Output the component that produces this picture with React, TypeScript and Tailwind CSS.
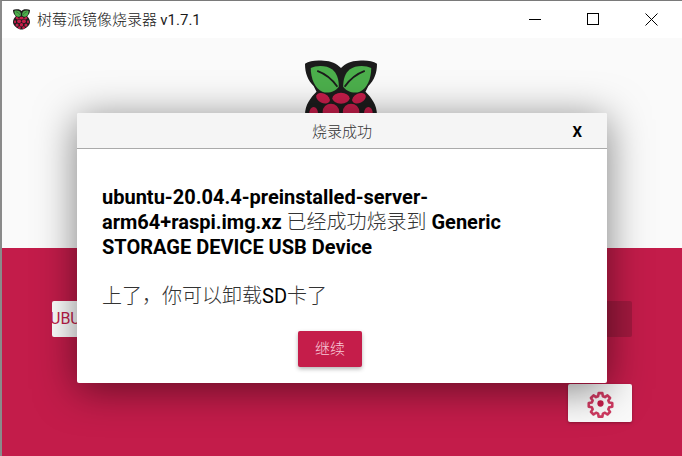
import React from "react";

function Logo({ className }: { className?: string }) {
  return (
    <svg viewBox="0 0 100 122" className={className}>
      <path d="M0 5 C6 1 16 0 26 1 C36 1 44 5 50 11 C56 5 64 1 74 1 C84 0 94 1 100 5 C100 18 96 28 88 36 L84 44 C92 52 100 62 100 76 C100 94 82 110 62 118 C56 121 44 121 38 118 C18 110 0 94 0 76 C0 62 8 52 16 44 L12 36 C4 28 0 18 0 5 Z" fill="#1c1c1c" />
      <path d="M8 11 C16 7 30 7 38 13 C44 18 47 26 47 37 C42 44 32 47 24 44 C14 40 8 26 8 11 Z" fill="#4caf4c" />
      <path d="M92 11 C84 7 70 7 62 13 C56 18 53 26 53 37 C58 44 68 47 76 44 C86 40 92 26 92 11 Z" fill="#4caf4c" />
      <path d="M17 15 C28 19 38 27 45 37" fill="none" stroke="#1c1c1c" strokeWidth="2.5" />
      <path d="M83 15 C72 19 62 27 55 37" fill="none" stroke="#1c1c1c" strokeWidth="2.5" />
      <ellipse cx="50" cy="53" rx="12" ry="7.5" fill="#c51d4a" />
      <ellipse cx="25" cy="53" rx="10" ry="6.5" fill="#c51d4a" transform="rotate(25 25 53)" />
      <ellipse cx="75" cy="53" rx="10" ry="6.5" fill="#c51d4a" transform="rotate(-25 75 53)" />
      <circle cx="36" cy="72" r="11.5" fill="#c51d4a" />
      <circle cx="64" cy="72" r="11.5" fill="#c51d4a" />
      <ellipse cx="12" cy="74" rx="6" ry="9" fill="#c51d4a" />
      <ellipse cx="88" cy="74" rx="6" ry="9" fill="#c51d4a" />
      <circle cx="50" cy="92" r="10" fill="#c51d4a" />
      <circle cx="24" cy="94" r="9" fill="#c51d4a" />
      <circle cx="76" cy="94" r="9" fill="#c51d4a" />
      <circle cx="38" cy="109" r="8" fill="#c51d4a" />
      <circle cx="62" cy="109" r="8" fill="#c51d4a" />
    </svg>
  );
}

function Gear() {
  return (
    <svg viewBox="0 0 24 24" className="w-[29px] h-[29px]" fill="none" stroke="#cf3a61" strokeWidth="2.4" strokeLinecap="round" strokeLinejoin="round">
      <path d="M10.3 2.5h3.4l.5 2.8 1.9.8 2.3-1.6 2.4 2.4-1.6 2.3.8 1.9 2.8.5v3.4l-2.8.5-.8 1.9 1.6 2.3-2.4 2.4-2.3-1.6-1.9.8-.5 2.8h-3.4l-.5-2.8-1.9-.8-2.3 1.6-2.4-2.4 1.6-2.3-.8-1.9-2.8-.5v-3.4l2.8-.5.8-1.9-1.6-2.3 2.4-2.4 2.3 1.6 1.9-.8z" transform="translate(1.2 1.2) scale(.9)" />
      <circle cx="12" cy="12" r="2.6" fill="#c51d4a" stroke="none" />
    </svg>
  );
}

export default function App() {
  return (
    <div
      className="relative w-[682px] h-[456px] overflow-hidden flex flex-col bg-white border-t border-t-[#7a7a7a] border-l-2 border-l-[#8a8a8a]"
      style={{ fontFamily: 'Roboto, "Noto Sans CJK SC", sans-serif' }}
    >
      <div className="h-[37px] shrink-0 bg-white flex items-center">
        <Logo className="w-[17px] h-[21px] ml-[11px] mr-[7px]" />
        <span className="text-[15px] text-[#1a1a1a]" style={{ fontFamily: '"Noto Sans CJK SC", sans-serif', fontWeight: 300 }}>
          树莓派镜像烧录器 <span style={{ fontFamily: 'Roboto', fontWeight: 400 }}>v1.7.1</span>
        </span>
        <div className="ml-auto flex items-center pr-[2px] -mt-[1px]">
          <div className="w-[58px] flex justify-center"><div className="w-3 h-px bg-black" /></div>
          <div className="w-[58px] flex justify-center"><div className="w-3 h-3 border border-black" /></div>
          <div className="w-[58px] flex justify-center">
            <svg width="13" height="13" viewBox="0 0 13 13" stroke="black" strokeWidth="1"><path d="M.5.5l12 12M12.5.5l-12 12" /></svg>
          </div>
        </div>
      </div>

      <div className="h-[210px] shrink-0 bg-[#fafafa] flex justify-center pt-[22px]">
        <Logo className="w-[72px] h-[88px] -ml-[2px]" />
      </div>

      <div className="flex-1 bg-[#c31c4a] pl-[50px] pr-[50px] pt-[53px] flex flex-col">
        <div className="flex justify-between">
          <div className="w-[200px] h-[36px] bg-white rounded-[2px] flex items-center text-[16px] text-[#c31c4a] overflow-hidden"><span className="-ml-[2px]">UBUNTU</span></div>
          <div className="w-[200px] h-[36px] bg-[#a3193f] rounded-[2px]" />
        </div>
        <div className="flex justify-end mt-[47px]">
          <div className="w-[64px] h-[38px] bg-[#fafafa] rounded-[2px] flex items-center justify-center shadow-[0_1px_3px_rgba(0,0,0,0.3)]">
            <Gear />
          </div>
        </div>
      </div>

      <div className="absolute left-[75px] top-[112px] w-[530px] h-[270px] bg-white rounded-[2px] shadow-[0_6px_40px_rgba(0,0,0,0.5)] flex flex-col">
        <div className="relative h-[36px] shrink-0 bg-[#f5f5f5] border-b border-b-[#aaaaaa] rounded-t-[2px] flex items-center justify-center text-[15px] text-[#333] pt-[4px]" style={{ fontWeight: 300 }}>
          烧录成功
          <span className="absolute right-[25px] top-[9px] text-[15px] leading-[20px] font-bold text-black">X</span>
        </div>
        <div className="px-[25px] pt-[36px] flex-1 flex flex-col">
          <p className="text-[20px] leading-[25px] text-[#333] w-[420px]">
            <b className="font-bold text-black">ubuntu-20.04.4-preinstalled-server-<br />arm64+raspi.img.xz</b>
            <span style={{ fontWeight: 300 }}> 已经成功烧录到 </span>
            <b className="font-bold text-black">Generic<br />STORAGE DEVICE USB Device</b>
          </p>
          <p className="text-[20px] leading-[25px] mt-[24px] text-[#333]" style={{ fontWeight: 300 }}>上了，你可以卸载<span className="text-black font-normal">SD</span>卡了</p>
          <div className="mt-[22px] ml-[196px]">
            <div className="w-[64px] h-[36px] bg-[#c51d4a] rounded-[2px] text-[15px] text-[#f8c8d6] flex items-center justify-center shadow-[0_2px_4px_rgba(0,0,0,0.3)]" style={{ fontWeight: 300 }}>继续</div>
          </div>
        </div>
      </div>
    </div>
  );
}
